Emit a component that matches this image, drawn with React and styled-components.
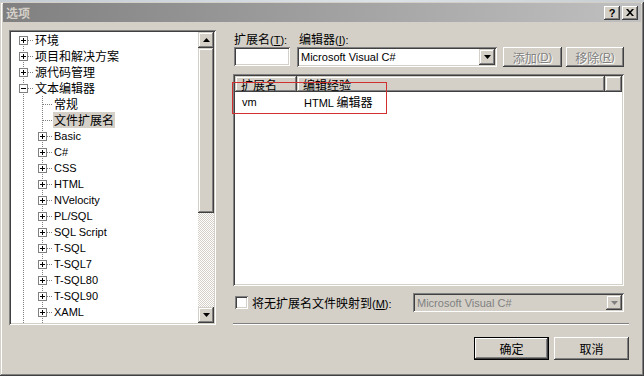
import React from 'react';
import styled, { createGlobalStyle, css } from 'styled-components';

const Global = createGlobalStyle`
  html, body { margin: 0; padding: 0; background: #d4d0c8; overflow: hidden; }
  body {
    width: 644px; height: 376px;
    font-family: "Liberation Sans", Arial, "Noto Sans CJK SC", sans-serif;
    font-size: 11px; color: #000;
  }
  u { text-decoration: underline; text-underline-offset: 1px; }
`;

const raised = css`
  background: #d4d0c8;
  box-shadow: inset -1px -1px #404040, inset 1px 1px #d4d0c8, inset -2px -2px #808080, inset 2px 2px #fff;
`;
const raisedButton = css`
  background: #d4d0c8;
  box-shadow: inset -1px -1px #404040, inset 1px 1px #fff, inset -2px -2px #808080, inset 2px 2px #d4d0c8;
`;
const sunken = css`
  box-shadow: inset 1px 1px #808080, inset -1px -1px #fff, inset 2px 2px #404040, inset -2px -2px #d4d0c8;
`;

const Zh = styled.span`
  font-family: "Noto Sans CJK SC", sans-serif;
  font-size: 12px;
`;

const Page = styled.div`
  width: 644px; height: 376px;
  display: flex; flex-direction: column;
`;
const Backdrop = styled.div`
  height: 2px; flex: none;
  background: linear-gradient(90deg, #c4ccd4, #dde2e8 60%, #c8cdd2);
`;
const Window = styled.div`
  flex: 1; display: flex; flex-direction: column;
  padding: 1px 3px 3px 3px;
  background: #d4d0c8;
  box-shadow: inset -1px -1px #404040, inset 1px 1px #d4d0c8, inset -2px -2px #808080, inset 2px 2px #fff;
`;
const TitleBar = styled.div`
  height: 19px; flex: none;
  display: flex; align-items: center;
  padding: 0 3px 0 3px;
  background: linear-gradient(90deg, #808080, #c0c0c0);
`;
const TitleText = styled.span`
  font-family: "Noto Sans CJK SC", sans-serif;
  font-weight: bold; font-size: 12px; color: #d4d0c8;
  line-height: 19px;
`;
const CaptionButtons = styled.div`
  margin-left: auto; display: flex; gap: 2px;
`;
const CaptionButton = styled.div`
  width: 16px; height: 14px;
  ${raisedButton};
  display: flex; align-items: center; justify-content: center;
  font: bold 11px "Liberation Sans", Arial, sans-serif;
  line-height: 14px;
`;

const Content = styled.div`
  flex: 1; display: flex; gap: 17px;
  padding: 8px 12px 0 6px;
`;

/* ---------- Tree ---------- */
const TreePanel = styled.div`
  width: 207px; height: 295px; flex: none;
  box-sizing: border-box; padding: 2px;
  background: #fff;
  ${sunken};
  display: flex;
`;
const TreeBody = styled.div`
  flex: 1; overflow: hidden;
  padding-left: 3px;
`;
const TreeRow = styled.div`
  height: 16px; display: flex; align-items: center;
  white-space: nowrap;
`;
const TreeLabel = styled.span`
  margin-left: 1px;
  padding: 0 1px;
  height: 16px; line-height: 16px;
  background: ${p => (p.$selected ? '#d4d0c8' : 'transparent')};
`;

const ScrollBar = styled.div`
  width: 16px; flex: none;
  display: flex; flex-direction: column;
`;
const ScrollButton = styled.div`
  width: 16px; height: 16px; flex: none;
  ${raised};
  display: flex; align-items: center; justify-content: center;
`;
const ScrollThumb = styled.div`
  height: ${p => p.$h}px; flex: none;
  ${raised};
`;
const ScrollTrack = styled.div`
  flex: 1;
  background-color: #fff;
  background-image: repeating-conic-gradient(#d4d0c8 0 25%, #fff 0 50%);
  background-size: 2px 2px;
`;

const dots = { stroke: '#808080', strokeDasharray: '1 1', fill: 'none' };

function Connector({ first, box, expanded }) {
  return (
    <svg width="19" height="16" viewBox="0 0 19 16" style={{ flex: 'none' }}>
      <path d={`M9.5 ${first ? 8 : 0}V16`} {...dots} />
      <path d="M10 8.5H19" {...dots} />
      {box && (
        <>
          <rect x="5.5" y="4.5" width="8" height="8" fill="#fff" stroke="#808080" />
          <path d={expanded ? 'M7 8.5h5' : 'M7 8.5h5M9.5 6v5'} stroke="#000" />
        </>
      )}
    </svg>
  );
}
function Guide() {
  return (
    <svg width="19" height="16" viewBox="0 0 19 16" style={{ flex: 'none' }}>
      <path d="M9.5 0V16" {...dots} />
    </svg>
  );
}

const Arrow = ({ up, color = '#000' }) => (
  <svg width="7" height="4" viewBox="0 0 7 4">
    <path d={up ? 'M3.5 0L7 4H0Z' : 'M0 0H7L3.5 4Z'} fill={color} />
  </svg>
);

const treeData = [
  { label: '环境', level: 0, box: true, zh: true },
  { label: '项目和解决方案', level: 0, box: true, zh: true },
  { label: '源代码管理', level: 0, box: true, zh: true },
  { label: '文本编辑器', level: 0, box: true, expanded: true, zh: true },
  { label: '常规', level: 1, zh: true },
  { label: '文件扩展名', level: 1, zh: true, selected: true },
  { label: 'Basic', level: 1, box: true },
  { label: 'C#', level: 1, box: true },
  { label: 'CSS', level: 1, box: true },
  { label: 'HTML', level: 1, box: true },
  { label: 'NVelocity', level: 1, box: true },
  { label: 'PL/SQL', level: 1, box: true },
  { label: 'SQL Script', level: 1, box: true },
  { label: 'T-SQL', level: 1, box: true },
  { label: 'T-SQL7', level: 1, box: true },
  { label: 'T-SQL80', level: 1, box: true },
  { label: 'T-SQL90', level: 1, box: true },
  { label: 'XAML', level: 1, box: true },
];

/* ---------- Right side ---------- */
const RightColumn = styled.div`
  width: 396px; flex: none;
  display: flex; flex-direction: column;
  padding-top: 3px;
`;
const FieldGrid = styled.div`
  display: grid;
  grid-template-columns: 63px 206px 63px 58px;
  grid-template-rows: 14px 20px;
  align-items: start;
`;
const FieldLabel = styled.div`
  padding-left: ${p => p.$pad || 1}px;
  line-height: 12px; height: 14px;
  grid-column: ${p => p.$col};
`;
const TextBox = styled.div`
  grid-row: 2; grid-column: 1;
  margin-left: 1px;
  width: 56px; height: 19px; box-sizing: border-box;
  background: #fff;
  ${sunken};
`;
const Combo = styled.div`
  grid-row: 2; grid-column: ${p => p.$col || 2};
  margin-left: 1px;
  width: ${p => p.$w || 200}px; height: ${p => p.$h || 20}px;
  box-sizing: border-box; padding: 2px;
  background: ${p => (p.$disabled ? '#d4d0c8' : '#fff')};
  ${sunken};
  display: flex; align-items: stretch;
`;
const ComboText = styled.div`
  flex: 1; padding-left: 2px;
  display: flex; align-items: center;
  color: ${p => (p.$disabled ? '#808080' : '#000')};
`;
const ComboButton = styled.div`
  width: 16px; flex: none;
  ${raised};
  display: flex; align-items: center; justify-content: center;
`;
const Button = styled.div`
  grid-row: 2; grid-column: ${p => p.$col};
  margin-left: 1px;
  width: ${p => p.$w}px; height: ${p => p.$h || 20}px;
  box-sizing: border-box;
  ${raisedButton};
  display: flex; align-items: center; justify-content: center;
  color: ${p => (p.$disabled ? '#808080' : '#000')};
  text-shadow: ${p => (p.$disabled ? '1px 1px #fff' : 'none')};
  ${p => p.$default && css`
    border: 1px solid #000;
  `}
`;

const ListWrap = styled.div`
  position: relative;
  margin-top: 7px;
  width: 391px; height: 212px; box-sizing: border-box;
  padding: 2px;
  background: #fff;
  ${sunken};
`;
const ListHeader = styled.div`
  display: flex; height: 16px;
`;
const HeaderCell = styled.div`
  width: ${p => (p.$w ? `${p.$w}px` : 'auto')};
  flex: ${p => (p.$w ? 'none' : 1)};
  ${raised};
  padding-left: 6px; box-sizing: border-box;
  line-height: 17px;
  white-space: nowrap;
`;
const ListRow = styled.div`
  display: flex; height: 15px; margin-top: 2px;
  align-items: center;
`;
const ListCell = styled.div`
  width: ${p => p.$w}px; flex: none;
  padding-left: 7px; box-sizing: border-box;
  white-space: nowrap;
`;
const Annotation = styled.div`
  position: absolute;
  left: -1px; top: 8px;
  width: 155px; height: 32px; box-sizing: border-box;
  border: 1px solid #d03030;
  pointer-events: none;
`;

const CheckRow = styled.div`
  margin-top: 7px;
  height: 19px;
  display: flex; align-items: center;
  padding-right: 5px;
`;
const CheckBox = styled.div`
  width: 13px; height: 13px; flex: none;
  margin-left: 2px; margin-right: 4px;
  box-sizing: border-box;
  background: #fff;
  ${sunken};
`;
const DisabledCombo = styled(Combo)`
  margin-left: auto;
`;

const Separator = styled.div`
  margin-top: 11px;
  height: 2px;
  border-top: 1px solid #808080;
  border-bottom: 1px solid #fff;
  box-sizing: border-box;
`;
const ButtonRow = styled.div`
  margin-top: 12px;
  display: flex; justify-content: flex-end; gap: 4px;
`;

export default function App() {
  return (
    <>
      <Global />
      <Page>
        <Backdrop />
        <Window>
          <TitleBar>
            <TitleText>选项</TitleText>
            <CaptionButtons>
              <CaptionButton>?</CaptionButton>
              <CaptionButton>
                <svg width="8" height="7" viewBox="0 0 8 7">
                  <path d="M0 0L2 0L4 2.2L6 0L8 0L5 3.5L8 7L6 7L4 4.8L2 7L0 7L3 3.5Z" fill="#000" />
                </svg>
              </CaptionButton>
            </CaptionButtons>
          </TitleBar>

          <Content>
            <TreePanel>
              <TreeBody>
                {treeData.map((n, i) => (
                  <TreeRow key={n.label}>
                    {n.level === 1 && <Guide />}
                    <Connector first={i === 0} box={n.box} expanded={n.expanded} />
                    <TreeLabel $selected={n.selected}>
                      {n.zh ? <Zh>{n.label}</Zh> : n.label}
                    </TreeLabel>
                  </TreeRow>
                ))}
                <TreeRow>
                  <Guide />
                  <Guide />
                </TreeRow>
              </TreeBody>
              <ScrollBar>
                <ScrollButton><Arrow up /></ScrollButton>
                <ScrollThumb $h={165} />
                <ScrollTrack />
                <ScrollButton><Arrow /></ScrollButton>
              </ScrollBar>
            </TreePanel>

            <RightColumn>
              <FieldGrid>
                <FieldLabel $col={1}><Zh>扩展名</Zh>(<u>T</u>):</FieldLabel>
                <FieldLabel $col={2} $pad={3}><Zh>编辑器</Zh>(<u>I</u>):</FieldLabel>
                <TextBox />
                <Combo>
                  <ComboText>Microsoft Visual C#</ComboText>
                  <ComboButton><Arrow /></ComboButton>
                </Combo>
                <Button $col={3} $w={59} $disabled><Zh>添加</Zh>(<u>D</u>)</Button>
                <Button $col={4} $w={58} $disabled><Zh>移除</Zh>(<u>R</u>)</Button>
              </FieldGrid>

              <ListWrap>
                <ListHeader>
                  <HeaderCell $w={62}><Zh>扩展名</Zh></HeaderCell>
                  <HeaderCell $w={308}><Zh>编辑经验</Zh></HeaderCell>
                  <HeaderCell />
                </ListHeader>
                <ListRow>
                  <ListCell $w={62}>vm</ListCell>
                  <ListCell $w={308}>HTML <Zh>编辑器</Zh></ListCell>
                </ListRow>
                <Annotation />
              </ListWrap>

              <CheckRow>
                <CheckBox />
                <span><Zh>将无扩展名文件映射到</Zh>(<u>M</u>):</span>
                <DisabledCombo $w={211} $h={19} $disabled>
                  <ComboText $disabled>Microsoft Visual C#</ComboText>
                  <ComboButton><Arrow color="#808080" /></ComboButton>
                </DisabledCombo>
              </CheckRow>

              <Separator />

              <ButtonRow>
                <Button $w={75} $h={23} $default><Zh>确定</Zh></Button>
                <Button $w={75} $h={23}><Zh>取消</Zh></Button>
              </ButtonRow>
            </RightColumn>
          </Content>
        </Window>
      </Page>
    </>
  );
}
